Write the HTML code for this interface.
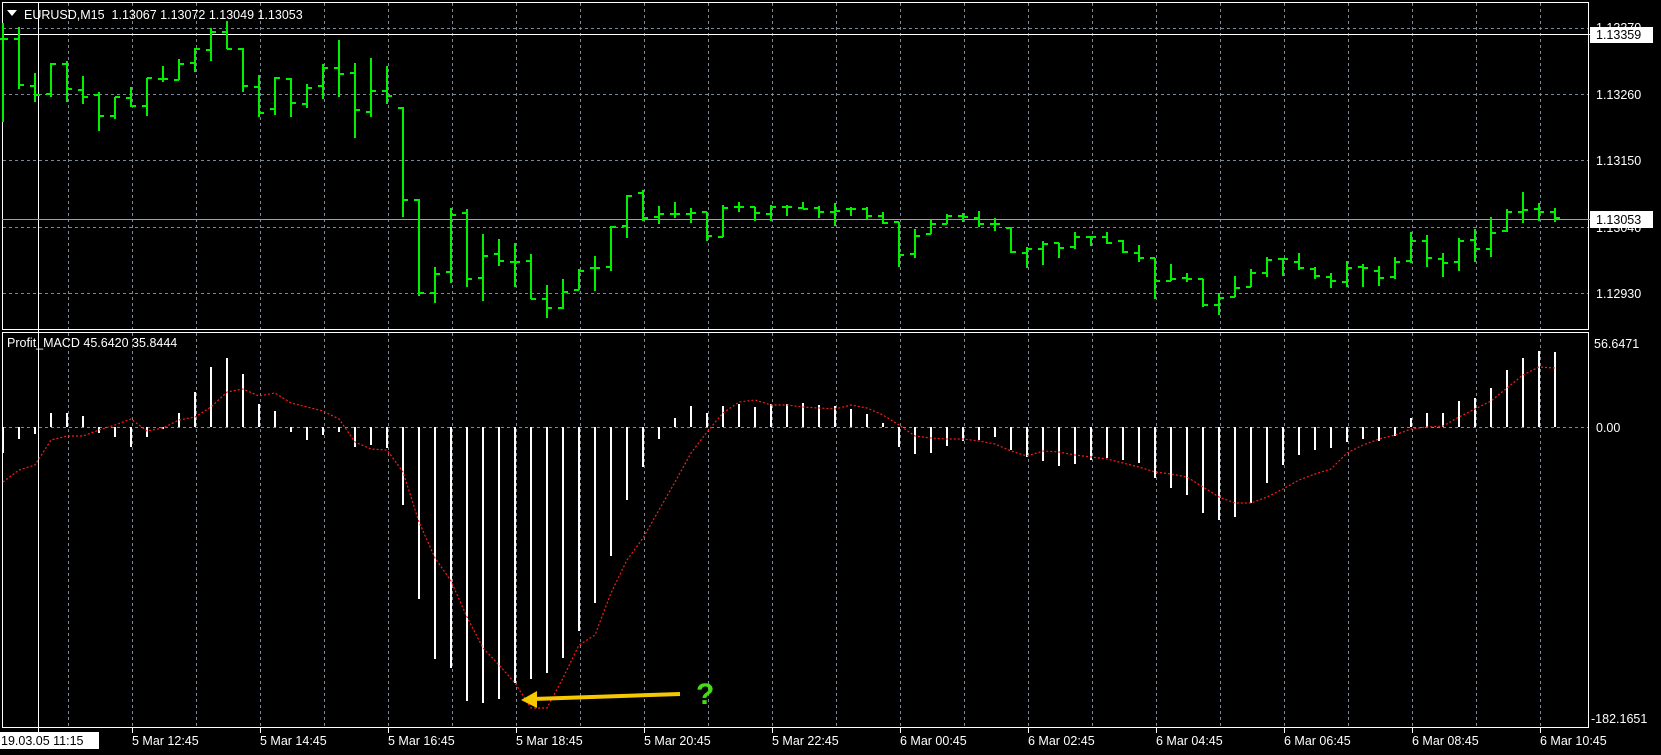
<!DOCTYPE html>
<html><head><meta charset="utf-8"><style>
html,body{margin:0;padding:0;background:#000;width:1661px;height:755px;overflow:hidden}
svg{display:block}
text{font-family:"Liberation Sans",sans-serif;font-size:12.5px;fill:#fff}
</style></head><body>
<svg id="s" width="1661" height="755" xmlns="http://www.w3.org/2000/svg">
<rect width="1661" height="755" fill="#000"/>
<g id="grid" stroke="#7a8899" stroke-width="1" stroke-dasharray="3,3"></g>
<g fill="none" stroke="#fff" stroke-width="1">
<rect x="2.5" y="2.5" width="1586" height="327"/>
<rect x="2.5" y="332.5" width="1586" height="395"/>
</g>
<line x1="38.5" y1="2" x2="38.5" y2="732" stroke="#fff"/>
<line x1="2" y1="34.5" x2="1590" y2="34.5" stroke="#fff"/>
<line x1="2" y1="219.5" x2="1590" y2="219.5" stroke="#a0a0a0"/>
<g id="bars" stroke="#00f000" stroke-width="2"></g>
<g id="hist" stroke="#fff" stroke-width="2"></g>
<polyline id="sig" fill="none" stroke="#ff1a1a" stroke-width="1.2" stroke-dasharray="2,2"/>
<g id="ticks" stroke="#fff"></g>
<polygon points="7,10 17,10 12,16" fill="#fff"/>
<text x="24" y="19">EURUSD,M15&#160; 1.13067 1.13072 1.13049 1.13053</text>
<text x="7" y="347">Profit_MACD 45.6420 35.8444</text>
<text x="1596" y="32">1.13370</text>
<rect x="1590" y="27" width="63" height="16" fill="#fff"/>
<text x="1596" y="39" style="fill:#000">1.13359</text>
<text x="1596" y="99">1.13260</text>
<text x="1596" y="165">1.13150</text>
<text x="1596" y="232">1.13040</text>
<rect x="1590" y="211" width="63" height="17" fill="#fff"/>
<text x="1596" y="224" style="fill:#000">1.13053</text>
<text x="1596" y="298">1.12930</text>
<text x="1594" y="348">56.6471</text>
<text x="1596" y="432">0.00</text>
<text x="1591" y="723">-182.1651</text>
<rect x="0" y="732" width="99" height="17" fill="#fff"/>
<text x="1" y="745" style="fill:#000">19.03.05 11:15</text>
<g id="tl"></g>
<line x1="680" y1="694" x2="533" y2="699" stroke="#f5c800" stroke-width="4"/>
<polygon points="521,700 537,691 537,708" fill="#f5c800"/>
<text x="696" y="704" style="font-size:30px;font-weight:bold;fill:#44dd11">?</text>
</svg>
<script>
var NS="http://www.w3.org/2000/svg";
function el(p,t,a,txt){var e=document.createElementNS(NS,t);for(var k in a)e.setAttribute(k,a[k]);if(txt)e.textContent=txt;document.getElementById(p).appendChild(e);}
for(var x=68;x<1589;x+=64){el("grid","line",{x1:x+.5,y1:3,x2:x+.5,y2:329});el("grid","line",{x1:x+.5,y1:333,x2:x+.5,y2:727});}
[28,94,160,227,293].forEach(function(y){el("grid","line",{x1:3,y1:y+.5,x2:1588,y2:y+.5});});
el("grid","line",{x1:3,y1:427.5,x2:1588,y2:427.5});
var B=[[23,122,39,39],[27,89,39,85],[73,102,86,95],[63,97,94,64],[61,102,64,89],[76,104,90,97],[92,131,95,116],[97,119,116,97],[87,107,98,106],[78,116,106,78],[66,82,79,79],[59,80,80,64],[48,72,63,49],[28,61,50,32],[21,49,32,49],[48,92,49,86],[75,117,87,113],[77,115,109,78],[78,117,79,103],[84,108,104,88],[64,99,86,68],[40,97,68,74],[63,138,73,110],[58,117,112,91],[66,104,91,96],[107,217,108,200],[199,296,200,293],[267,303,293,274],[208,283,272,215],[209,287,213,279],[234,301,278,256],[239,266,254,261],[243,287,262,262],[254,299,261,299],[285,318,299,308],[279,309,308,292],[269,290,290,271],[256,291,268,268],[226,271,267,227],[195,238,226,196],[190,221,193,218],[206,224,217,214],[202,218,214,214],[208,223,214,213],[212,241,212,236],[205,237,237,208],[202,212,207,207],[207,221,207,213],[205,221,214,207],[205,216,207,207],[202,209,208,209],[206,218,208,212],[203,226,212,211],[207,216,209,209],[207,219,209,216],[212,224,216,223],[222,267,222,255],[229,258,254,236],[220,234,234,224],[214,224,224,216],[213,222,216,217],[211,227,218,224],[218,231,224,224],[228,253,228,252],[247,268,253,249],[241,265,249,244],[243,258,243,248],[232,249,247,237],[237,246,237,237],[232,244,237,243],[240,253,241,252],[245,262,253,258],[258,299,258,281],[264,281,281,279],[273,282,278,279],[279,307,279,305],[293,315,305,298],[276,297,297,288],[269,287,287,273],[257,277,273,260],[258,276,259,259],[253,270,262,268],[267,279,269,276],[273,288,277,281],[261,287,282,268],[264,287,267,268],[266,286,271,278],[257,279,277,262],[232,263,261,241],[235,267,241,258],[253,277,259,263],[238,271,262,241],[229,262,240,249],[217,257,249,233],[209,232,231,212],[192,223,212,210],[203,221,209,212],[208,222,212,218]];
var H=[453,439,434,413,413,416,433,437,447,437,429,413,392,367,358,374,404,411,432,440,435,432,447,445,448,505,599,659,668,701,703,699,683,679,673,658,631,603,556,500,467,439,418,406,413,406,404,407,404,404,403,405,406,409,414,423,447,454,453,446,441,440,437,450,457,461,466,464,460,458,460,463,478,488,495,513,520,517,503,483,465,455,450,448,442,439,441,436,418,413,413,401,398,388,370,358,351,352];
var S=[482,470,465,440,436,436,430,425,419,431,428,420,417,407,392,389,396,393,403,407,411,419,442,449,450,472,522,558,581,617,648,665,683,708,708,678,645,635,593,560,538,510,482,453,432,413,402,400,405,405,407,408,409,405,408,415,425,436,438,439,439,441,444,451,456,451,452,455,457,459,463,467,472,474,477,487,497,503,503,497,489,480,474,469,453,445,439,435,429,427,426,417,409,401,388,375,367,368];
var pts=[];
for(var i=0;i<B.length;i++){var x=3+16*i,b=B[i];
el("bars","line",{x1:x,y1:b[0],x2:x,y2:b[1]});
el("bars","line",{x1:x-5,y1:b[2],x2:x,y2:b[2]});
el("bars","line",{x1:x,y1:b[3],x2:x+5,y2:b[3]});
el("hist","line",{x1:x,y1:427,x2:x,y2:H[i]});
pts.push(x+","+S[i]);}
document.getElementById("sig").setAttribute("points",pts.join(" "));
var L=["5 Mar 12:45","5 Mar 14:45","5 Mar 16:45","5 Mar 18:45","5 Mar 20:45","5 Mar 22:45","6 Mar 00:45","6 Mar 02:45","6 Mar 04:45","6 Mar 06:45","6 Mar 08:45","6 Mar 10:45"];
for(var j=0;j<L.length;j++){var tx=132+128*j;el("ticks","line",{x1:tx+.5,y1:728,x2:tx+.5,y2:733});el("tl","text",{x:tx,y:745},L[j]);}
</script>
</body></html>
